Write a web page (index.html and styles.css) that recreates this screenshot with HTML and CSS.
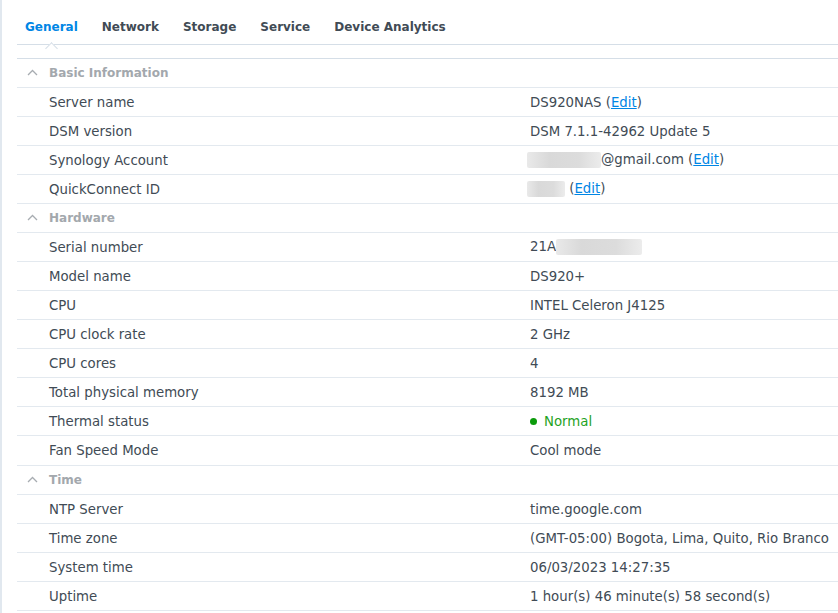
FILE: index.html
```html
<!DOCTYPE html>
<html>
<head>
<meta charset="utf-8">
<link rel="stylesheet" href="styles.css">
</head>
<body>
<div class="page">
  <div class="tabs">
    <div class="tab active">General</div>
    <div class="tab">Network</div>
    <div class="tab">Storage</div>
    <div class="tab">Service</div>
    <div class="tab">Device Analytics</div>
  </div>
  <div class="table">
    <div class="row head"><svg class="chev" width="11" height="7" viewBox="0 0 11 7"><polyline points="1,6 5.5,1.5 10,6" fill="none" stroke="#a7acb1" stroke-width="1.3"/></svg><span>Basic Information</span></div>
    <div class="row"><div class="label">Server name</div><div class="value">DS920NAS (<a class="link">Edit</a>)</div></div>
    <div class="row"><div class="label">DSM version</div><div class="value">DSM 7.1.1-42962 Update 5</div></div>
    <div class="row"><div class="label">Synology Account</div><div class="value shift"><span class="blur b-mail"></span>@gmail.com (<a class="link">Edit</a>)</div></div>
    <div class="row"><div class="label">QuickConnect ID</div><div class="value shift"><span class="blur b-qc"></span> (<a class="link">Edit</a>)</div></div>
    <div class="row head"><svg class="chev" width="11" height="7" viewBox="0 0 11 7"><polyline points="1,6 5.5,1.5 10,6" fill="none" stroke="#a7acb1" stroke-width="1.3"/></svg><span>Hardware</span></div>
    <div class="row"><div class="label">Serial number</div><div class="value">21A<span class="blur b-sn"></span></div></div>
    <div class="row"><div class="label">Model name</div><div class="value">DS920+</div></div>
    <div class="row"><div class="label">CPU</div><div class="value">INTEL Celeron J4125</div></div>
    <div class="row"><div class="label">CPU clock rate</div><div class="value">2 GHz</div></div>
    <div class="row"><div class="label">CPU cores</div><div class="value">4</div></div>
    <div class="row"><div class="label">Total physical memory</div><div class="value">8192 MB</div></div>
    <div class="row"><div class="label">Thermal status</div><div class="value ok"><span class="dot"></span>Normal</div></div>
    <div class="row tall"><div class="label">Fan Speed Mode</div><div class="value">Cool mode</div></div>
    <div class="row head"><svg class="chev" width="11" height="7" viewBox="0 0 11 7"><polyline points="1,6 5.5,1.5 10,6" fill="none" stroke="#a7acb1" stroke-width="1.3"/></svg><span>Time</span></div>
    <div class="row"><div class="label">NTP Server</div><div class="value">time.google.com</div></div>
    <div class="row"><div class="label">Time zone</div><div class="value">(GMT-05:00) Bogota, Lima, Quito, Rio Branco</div></div>
    <div class="row"><div class="label">System time</div><div class="value">06/03/2023 14:27:35</div></div>
    <div class="row"><div class="label">Uptime</div><div class="value">1 hour(s) 46 minute(s) 58 second(s)</div></div>
  </div>
</div>
</body>
</html>
```
FILE: styles.css
```css
html, body {
  margin: 0;
  padding: 0;
  background: #fff;
}
body {
  font-family: "DejaVu Sans", Verdana, sans-serif;
  font-size: 13.3px;
  color: #414b55;
  width: 838px;
  height: 613px;
  overflow: hidden;
}
.page {
  border-left: 2px solid #e1e8ef;
  height: 613px;
  padding-left: 15px;
  box-sizing: border-box;
}
.tabs {
  display: flex;
  gap: 24px;
  padding-left: 8px;
  height: 45px;
  align-items: center;
  border-bottom: 1px solid #d5dee7;
  position: relative;
  box-sizing: border-box;
  padding-top: 10px;
}
.tab {
  font-weight: bold;
  font-size: 12px;
  color: #414b55;
  position: relative;
}
.tab.active {
  color: #0086e5;
}
.tab.active::after {
  content: "";
  position: absolute;
  left: 22px;
  top: 24px;
  width: 8px;
  height: 8px;
  background: #fff;
  border-top: 1px solid #d5dee7;
  border-left: 1px solid #d5dee7;
  transform: rotate(45deg);
}
.table {
  margin-top: 13px;
  border-top: 1px solid #d5dee7;
}
.row {
  display: flex;
  align-items: center;
  height: 28px;
  border-bottom: 1px solid #e3e9ef;
  padding-left: 32px;
}
.row.tall {
  height: 29px;
}
.row.head {
  padding-left: 10px;
  font-weight: bold;
  font-size: 12px;
  color: #a3a8ad;
}
.chev {
  margin-right: 11px;
  margin-top: -2px;
}
.label {
  width: 481px;
  flex: none;
}
.value {
  white-space: nowrap;
}
.value.shift {
  margin-left: -3px;
}
.link {
  color: #0086e5;
  text-decoration: underline;
}
.blur {
  display: inline-block;
  height: 16px;
  vertical-align: middle;
  background: linear-gradient(90deg, #e9e9e9, #d9d9d9 30%, #dcdcdc 70%, #ececec);
  border-radius: 2px;
}
.b-mail { width: 74px; }
.b-qc { width: 38px; }
.b-sn { width: 86px; }
.ok { color: #1fa31f; }
.dot {
  display: inline-block;
  width: 7px;
  height: 7px;
  border-radius: 50%;
  background: #0b9b0b;
  margin-right: 7px;
  vertical-align: 1px;
}
```
